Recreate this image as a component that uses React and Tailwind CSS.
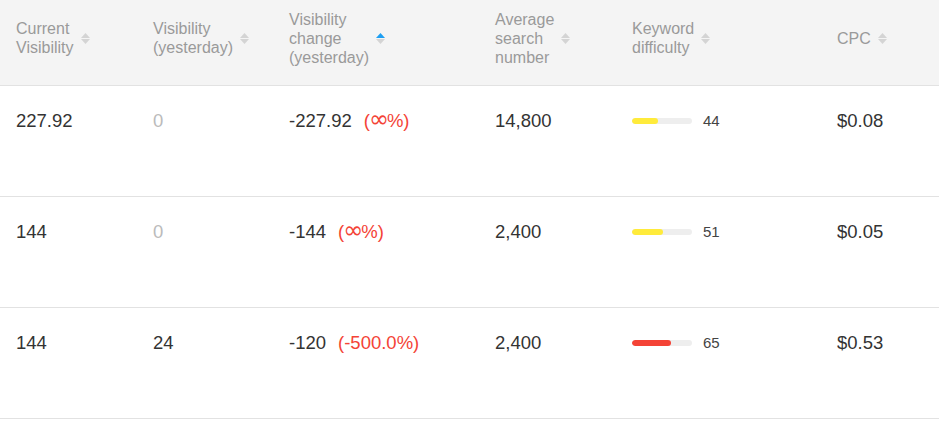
import React from 'react';

// Column widths taken from the table grid
const cols = 'grid grid-cols-[137px_136px_206px_137px_205px_1fr]';

const SortIcon = ({ active }) => (
    <span className="ml-[7px] flex flex-col items-center gap-[1px]">
        <svg width="9" height="5" viewBox="0 0 9 5">
            <path d="M0 5 L4.5 0 L9 5 Z" fill={active ? '#1e9ff2' : '#d4d4d4'} />
        </svg>
        <svg width="9" height="5" viewBox="0 0 9 5">
            <path d="M0 0 L9 0 L4.5 5 Z" fill="#d4d4d4" />
        </svg>
    </span>
);

const Head = ({ lines, active }) => (
    <div className="flex items-center pl-4">
        <div>
            {lines.map((l) => (
                <div key={l}>{l}</div>
            ))}
        </div>
        <SortIcon active={active} />
    </div>
);

// the infinity sign is drawn noticeably larger than the digits
const Pct = ({ value }) =>
    value === 'inf' ? (
        <>
            (<span className="font-['DejaVu_Sans',sans-serif] text-[24px] leading-[0] ml-[-1px] mr-[-2px]">∞</span>%)
        </>
    ) : (
        value
    );

const rows = [
    { cur: '227.92', yest: '0', change: '-227.92', pct: 'inf', avg: '14,800', kd: 44, color: 'bg-[#ffeb3b]', cpc: '$0.08' },
    { cur: '144', yest: '0', change: '-144', pct: 'inf', avg: '2,400', kd: 51, color: 'bg-[#ffeb3b]', cpc: '$0.05' },
    { cur: '144', yest: '24', change: '-120', pct: '(-500.0%)', avg: '2,400', kd: 65, color: 'bg-[#f44336]', cpc: '$0.53' },
];

export default function App() {
    return (
        <div className="w-[939px] h-[424px] bg-white font-['Liberation_Sans',Arial,sans-serif] overflow-hidden">
            {/* Header */}
            <div className={`${cols} h-[86px] bg-[#f4f4f4] border-b border-[#e2e2e2] pb-[9px] text-[16px] leading-[19px] text-[#9a9a9a]`}>
                <Head lines={['Current', 'Visibility']} />
                <Head lines={['Visibility', '(yesterday)']} />
                <Head lines={['Visibility', 'change', '(yesterday)']} active />
                <Head lines={['Average', 'search', 'number']} />
                <Head lines={['Keyword', 'difficulty']} />
                <Head lines={['CPC']} />
            </div>

            {/* Rows */}
            {rows.map((r, i) => (
                <div key={i} className={`${cols} h-[111px] border-b border-[#e2e2e2] pt-[23px] text-[18.5px] leading-[24px] text-[#333]`}>
                    <div className="pl-4">{r.cur}</div>
                    <div className={`pl-4 ${r.yest === '0' ? 'text-[#bbb]' : ''}`}>{r.yest}</div>
                    <div className="pl-4">
                        {r.change}
                        <span className="ml-[12px] text-[#f44336]">
                            <Pct value={r.pct} />
                        </span>
                    </div>
                    <div className="pl-4">{r.avg}</div>
                    <div className="pl-4 flex items-center h-[24px]">
                        <div className="w-[60px] h-[6px] rounded-full bg-[#eeeeee] overflow-hidden">
                            <div className={`h-full rounded-full ${r.color}`} style={{ width: `${r.kd}%` }} />
                        </div>
                        <span className="ml-[11px] text-[15px] text-[#444]">{r.kd}</span>
                    </div>
                    <div className="pl-4">{r.cpc}</div>
                </div>
            ))}
        </div>
    );
}
